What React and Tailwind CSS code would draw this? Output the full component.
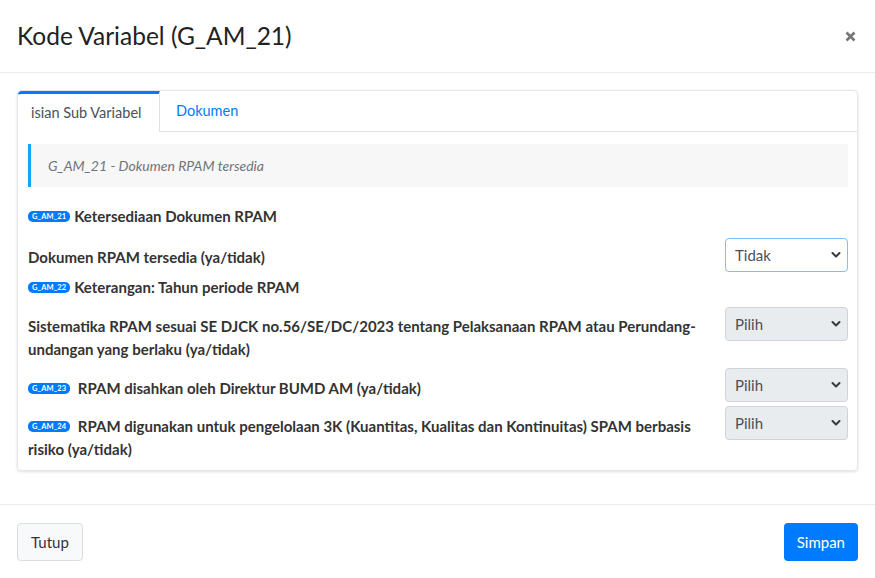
import React from 'react';

const Badge = ({ code }) => (
    <span className="inline-block align-[3px] bg-[#007bff] text-white text-[7.5px] font-bold leading-[11px] px-[4px] rounded-[5px] mr-[4px] tracking-[0.1px]">
        {code}
    </span>
);

const Chevron = () => (
    <svg className="absolute right-[7px] top-1/2 -translate-y-1/2 pointer-events-none" width="10" height="7" viewBox="0 0 10 7">
        <path d="M1.5 1.5 L5 5 L8.5 1.5" fill="none" stroke="#343a40" strokeWidth="2" strokeLinecap="round" strokeLinejoin="round" />
    </svg>
);

const Select = ({ value, disabled, focused }) => (
    <div className="relative w-[123px] h-[34px] shrink-0">
        <select
            disabled={disabled}
            defaultValue={value}
            className={
                'appearance-none w-full h-full rounded-[4px] border pl-[9px] text-[15px] font-normal text-[#495057] outline-none ' +
                (disabled ? 'bg-[#e9ecef] border-[#ced4da]' : 'bg-white') +
                (focused ? ' border-[#80bdff]' : '')
            }
        >
            <option>{value}</option>
        </select>
        <Chevron />
    </div>
);

export default function App() {
    return (
        <div className="w-[875px] h-[578px] bg-white text-[#212529] font-['Lato','Noto_Sans',sans-serif] flex flex-col">
            {/* header */}
            <div className="h-[73px] shrink-0 flex items-center justify-between px-[17px] border-b border-[#e9ecef]">
                <h1 className="text-[24.5px] font-normal leading-none text-[#222]">Kode Variabel (G_AM_21)</h1>
                <svg width="11" height="11" viewBox="0 0 11 11" className="mr-[2px]">
                    <path d="M1.5 1.5 L9.5 9.5 M9.5 1.5 L1.5 9.5" stroke="#777" strokeWidth="2.6" />
                </svg>
            </div>

            {/* body */}
            <div className="px-[17px] pt-[17px] pb-[33px] border-b border-[#e9ecef]">
                <div className="rounded-[4px] border border-[#e6e6e6] shadow-[0_1px_3px_rgba(0,0,0,0.12)]">
                    <div className="flex h-[41px] border-b border-[#dee2e6]">
                        <div className="w-[142px] -mb-px bg-white border-t-[3px] border-t-[#007bff] border-r border-r-[#dee2e6] rounded-tl-[4px] flex items-center pl-[13px] text-[14.5px] text-[#495057]">
                            isian Sub Variabel
                        </div>
                        <div className="flex items-center pl-[16px] text-[14.5px] text-[#007bff]">Dokumen</div>
                    </div>

                    <div className="pl-[10px] pr-[9px] pt-[12px] pb-[9px] text-[15px] font-bold text-[#333]">
                        <div className="h-[43px] bg-[#f7f7f7] border-l-[3px] border-l-[#17a2f8] flex items-center pl-[17px] text-[14px] font-normal italic text-[#6c757d]">
                            G_AM_21 - Dokumen RPAM tersedia
                        </div>

                        <div className="mt-[18px] leading-[23px]">
                            <Badge code="G_AM_21" />Ketersediaan Dokumen RPAM
                        </div>

                        <div className="mt-[10px] flex justify-between gap-[12px]">
                            <div className="pt-[8px] leading-[23px]">Dokumen RPAM tersedia (ya/tidak)</div>
                            <Select value="Tidak" focused />
                        </div>

                        <div className="mt-[4px] leading-[23px]">
                            <Badge code="G_AM_22" />Keterangan: Tahun periode RPAM
                        </div>

                        <div className="mt-[8px] flex justify-between gap-[12px]">
                            <div className="pt-[8px] leading-[23px]">
                                Sistematika RPAM sesuai SE DJCK no.56/SE/DC/2023 tentang Pelaksanaan RPAM atau Perundang-undangan yang berlaku (ya/tidak)
                            </div>
                            <Select value="Pilih" disabled />
                        </div>

                        <div className="mt-[7px] flex justify-between gap-[12px]">
                            <div className="pt-[9px] leading-[23px]">
                                <Badge code="G_AM_23" /> RPAM disahkan oleh Direktur BUMD AM (ya/tidak)
                            </div>
                            <Select value="Pilih" disabled />
                        </div>

                        <div className="mt-[4px] flex justify-between gap-[12px]">
                            <div className="pt-[9px] leading-[23px]">
                                <Badge code="G_AM_24" /> RPAM digunakan untuk pengelolaan 3K (Kuantitas, Kualitas dan Kontinuitas) SPAM berbasis risiko (ya/tidak)
                            </div>
                            <Select value="Pilih" disabled />
                        </div>
                    </div>
                </div>
            </div>

            {/* footer */}
            <div className="flex justify-between items-start px-[17px] pt-[18px]">
                <button className="h-[38px] px-[13px] rounded-[4px] border border-[#dadce0] bg-[#f8f9fa] text-[15px] text-[#333]">
                    Tutup
                </button>
                <button className="h-[38px] px-[13px] rounded-[4px] bg-[#007bff] text-[15px] text-white">
                    Simpan
                </button>
            </div>
        </div>
    );
}
